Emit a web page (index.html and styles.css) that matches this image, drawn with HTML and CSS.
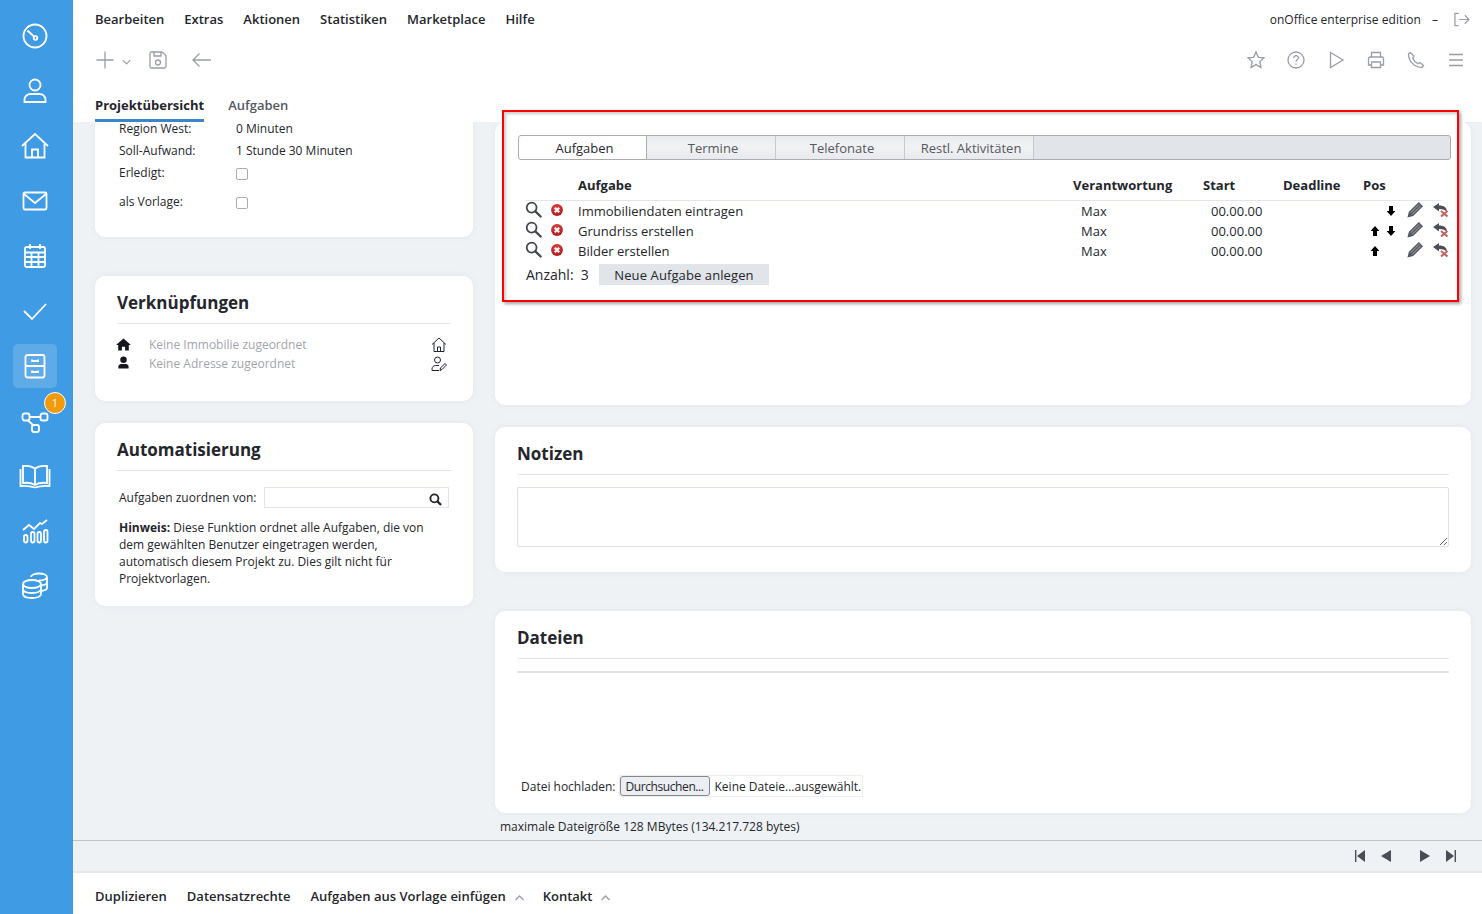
FILE: index.html
```html
<!DOCTYPE html>
<html lang="de">
<head>
    <meta charset="UTF-8">
    <meta name="viewport" content="width=device-width, initial-scale=1.0">
    <title>Projektübersicht</title>
    <link rel="stylesheet" href="styles.css">
</head>
<body>
    <!-- Shared icons for the task table -->
    <svg class="sprite" xmlns="http://www.w3.org/2000/svg">
        <defs>
            <radialGradient id="err-fill" cx="45%" cy="35%" r="70%"><stop offset="0" stop-color="#ec4a46"/><stop offset="1" stop-color="#a8141b"/></radialGradient>
        </defs>
        <symbol id="i-search" viewBox="0 0 18 18"><circle cx="7" cy="7" r="5.2" fill="none" stroke="#43464e" stroke-width="1.9"/><path d="M11 11l5.6 5.4" stroke="#43464e" stroke-width="2.4" stroke-linecap="round"/></symbol>
        <symbol id="i-error" viewBox="0 0 12 12"><circle cx="6" cy="6" r="5.9" fill="url(#err-fill)"/><path d="M3.8 3.8l4.4 4.4M8.2 3.800L3.800 8.200" stroke="#fff" stroke-width="2"/></symbol>
        <symbol id="i-up" viewBox="0 0 10 12"><path d="M5 1l4.4 5H7v5H3V6H.6z" fill="#000"/></symbol>
        <symbol id="i-down" viewBox="0 0 10 12"><path d="M5 11L.6 6H3V1h4v5h2.4z" fill="#000"/></symbol>
        <symbol id="i-pencil" viewBox="0 0 18 18"><path d="M.5 17.500L2 11.500 12.500 1l4.500 4.500L6.500 16z" fill="#55585f"/><path d="M3.800 12.500L13 3.300M5.500 14.200L14.700 5" stroke="#d4d6da" stroke-width=".7"/></symbol>
        <symbol id="i-undo" viewBox="0 0 16 14"><path d="M0 4l6-4v2.500c5 0 8 2 8 6.500-1.500-2-4-3-8-3v2.500z" fill="#4c4f57"/><path d="M8 8l6.500 5.500M14.500 8L8 13.500" stroke="#c0605f" stroke-width="2"/></symbol>
    </svg>

    <div class="app">
        <!-- Blue navigation rail -->
        <nav class="rail">
            <a class="rail-item"><svg viewBox="0 0 28 28"><circle cx="14" cy="14" r="11.500"/><path d="M6.500 8.500l6.500 6"/><circle cx="14.500" cy="16" r="1.800"/></svg></a>
            <a class="rail-item"><svg viewBox="0 0 28 28"><circle cx="14" cy="8" r="5.500"/><path d="M3.500 25v-2.500c0-3.500 3-5.500 6-5.500h9c3 0 6 2 6 5.500V25z"/></svg></a>
            <a class="rail-item"><svg viewBox="0 0 28 28"><path d="M1 14L14 2l13 12"/><path d="M4.500 11.500V25.500h19V11.500"/><path d="M11 25.500v-8h6v8"/></svg></a>
            <a class="rail-item"><svg viewBox="0 0 28 28"><rect x="2.500" y="5.500" width="23" height="17" rx="1.500"/><path d="M3 7l11 9 11-9"/></svg></a>
            <a class="rail-item"><svg viewBox="0 0 28 28"><rect x="4" y="5" width="20" height="20" rx="1.500"/><path d="M9 2v5M19 2v5M4 10.500h20M4 15h20M4 20h20M10.500 10.500V25M17.500 10.500V25"/></svg></a>
            <a class="rail-item"><svg viewBox="0 0 28 28"><path d="M3 14l8 8L25 7"/></svg></a>
            <a class="rail-item rail-active"><svg viewBox="0 0 28 28"><rect x="4.500" y="3" width="19" height="22.500" rx="2"/><path d="M4.500 14h19M11 7.500v1.500h6V7.500M11 18.500V20h6v-1.500"/></svg></a>
            <a class="rail-item"><svg viewBox="0 0 28 28"><rect x="1.500" y="6.500" width="7" height="7" rx="2"/><rect x="19.500" y="6.500" width="7" height="7" rx="2"/><rect x="11" y="18" width="7" height="7" rx="2"/><path d="M8.500 10h11M7 13.500l5 4.500"/></svg><span class="badge">1</span></a>
            <a class="rail-item"><svg viewBox="0 0 32 28"><path d="M16 6.500C13 4 8 3.500 4 4v17c4-.5 9 0 12 2 3-2 8-2.500 12-2V4c-4-.5-9 0-12 2.500zM16 6.500V23"/><path d="M1.500 7v17c5-.5 10 0 14.500 1.500C20.500 24 25.500 23.500 30.500 24V7"/></svg></a>
            <a class="rail-item"><svg viewBox="0 0 28 28"><path d="M2 13l6-5 5 4 6-6 2 1 5-4"/><rect x="3" y="18" width="3.500" height="7.500" rx="1.700"/><rect x="10" y="15" width="3.500" height="10.500" rx="1.700"/><rect x="16.500" y="15" width="3.500" height="10.500" rx="1.700"/><rect x="23" y="13" width="3.500" height="12.500" rx="1.700"/></svg></a>
            <a class="rail-item"><svg viewBox="0 0 28 28"><ellipse cx="11" cy="12" rx="9" ry="4"/><path d="M2 12v10c0 2.500 4 4 9 4s9-1.500 9-4V12M2 17c0 2.500 4 4 9 4s9-1.500 9-4"/><path d="M10 5c0-2 3.500-3.500 8-3.500S26 3 26 5s-3.500 3.500-8 3.500M26 5v11c0 1.500-2 2.500-6 3M26 10.500c0 1.500-2 2.500-6 3"/></svg></a>
        </nav>

        <div class="main">
            <header class="header">
                <div class="menu-row">
                    <ul class="menu">
                        <li>Bearbeiten</li>
                        <li>Extras</li>
                        <li>Aktionen</li>
                        <li>Statistiken</li>
                        <li>Marketplace</li>
                        <li>Hilfe</li>
                    </ul>
                    <div class="edition">
                        <span>onOffice enterprise edition</span>
                        <span class="edition-dash">–</span>
                        <svg class="tool-icon logout" viewBox="0 0 18 16"><path d="M6 1.500H2v13h4M6.500 8H17M12.500 3.500L17 8l-4.500 4.500"/></svg>
                    </div>
                </div>
                <div class="tool-row">
                    <div class="tools-left">
                        <svg class="tool-icon plus" viewBox="0 0 18 18"><path d="M9 .5v17M.5 9h17"/></svg>
                        <svg class="tool-icon caret" viewBox="0 0 10 6"><path d="M1 1l4 4 4-4"/></svg>
                        <svg class="tool-icon save" viewBox="0 0 18 18"><path d="M1 2.500C1 1.500 1.500 1 2.500 1h10.500L17 4.500v11c0 1-.5 1.500-1.500 1.500h-13C1.500 17 1 16.500 1 15.500z"/><path d="M5 1v4h7V1"/><circle cx="9" cy="11.500" r="2.500"/></svg>
                        <svg class="tool-icon back" viewBox="0 0 20 14"><path d="M19 7H1M7.500 .5L1 7l6.500 6.500"/></svg>
                    </div>
                    <div class="tools-right">
                        <svg class="tool-icon" viewBox="0 0 18 18"><path d="M9 1l2.400 5.300 5.600.6-4.200 3.800 1.200 5.800L9 13.600l-5 2.900 1.200-5.800L1 6.900l5.600-.6z"/></svg>
                        <svg class="tool-icon" viewBox="0 0 18 18"><circle cx="9" cy="9" r="8"/><path d="M6.800 7c0-3 4.600-3 4.600-.2 0 1.900-2.400 1.900-2.400 4M9 12.500v1"/></svg>
                        <svg class="tool-icon" viewBox="0 0 18 18"><path d="M3.500 1.500L16 9 3.500 16.500z"/></svg>
                        <svg class="tool-icon" viewBox="0 0 18 18"><path d="M4.500 6V1.500h9V6M4.500 14H1.500V7.500C1.500 6.500 2 6 3 6h12c1 0 1.500.5 1.500 1.500V14h-3"/><path d="M4.500 11h9v5.500h-9z"/></svg>
                        <svg class="tool-icon" viewBox="0 0 18 18"><path d="M3 1.500L1.500 3c0 7 6 13.500 13.500 13.500l1.500-2-3.500-3-2 1.200C8.500 11.500 6.500 9 5.700 7l1.300-2z"/></svg>
                        <svg class="tool-icon" viewBox="0 0 18 18"><path d="M2 3.500h14M2 9h14M2 14.500h14"/></svg>
                    </div>
                </div>
                <div class="page-tabs">
                    <a class="page-tab page-tab-active">Projektübersicht</a>
                    <a class="page-tab">Aufgaben</a>
                </div>
            </header>

            <div class="content">
                <div class="col-left">
                    <section class="card card-details">
                        <div class="detail-row"><span>Region West:</span><span>0 Minuten</span></div>
                        <div class="detail-row"><span>Soll-Aufwand:</span><span>1 Stunde 30 Minuten</span></div>
                        <div class="detail-row"><span>Erledigt:</span><input type="checkbox"></div>
                        <div class="detail-row detail-last"><span>als Vorlage:</span><input type="checkbox"></div>
                    </section>

                    <section class="card card-links">
                        <h2>Verknüpfungen</h2>
                        <div class="link-row">
                            <svg class="link-icon" viewBox="0 0 16 14"><path d="M8 .5L0 7.500h2.300V13.500h4V9.500h3.400v4h4V7.500H16z" fill="#16181d"/></svg>
                            <span>Keine Immobilie zugeordnet</span>
                            <svg class="link-action" viewBox="0 0 16 16"><path d="M1 7.500L8 1l7 6.500M3 6v8.500h10V6M6.500 14.500V10h3v4.500"/></svg>
                        </div>
                        <div class="link-row">
                            <svg class="link-icon link-icon-user" viewBox="0 0 16 14"><circle cx="8" cy="4" r="3.500" fill="#16181d"/><path d="M2.500 13.500v-2c0-2 1.500-3 3-3h5c1.500 0 3 1 3 3v2z" fill="#16181d"/></svg>
                            <span>Keine Adresse zugeordnet</span>
                            <svg class="link-action" viewBox="0 0 16 16"><circle cx="6.500" cy="4" r="3"/><path d="M8 14.500H1v-1.500c0-2 1.500-3.500 3.500-3.500H8M9 14.500l.5-2.500 4.500-4.500 1.500 1.500-4.500 4.500z"/></svg>
                        </div>
                    </section>

                    <section class="card card-auto">
                        <h2>Automatisierung</h2>
                        <div class="assign-row">
                            <label>Aufgaben zuordnen von:</label>
                            <div class="assign-input">
                                <svg viewBox="0 0 14 14"><circle cx="5.800" cy="5.800" r="4.300" fill="none" stroke="#24262c" stroke-width="2"/><path d="M9 9l4 4" stroke="#24262c" stroke-width="2.400"/></svg>
                            </div>
                        </div>
                        <p class="hint"><b>Hinweis:</b> Diese Funktion ordnet alle Aufgaben, die von dem gewählten Benutzer eingetragen werden, automatisch diesem Projekt zu. Dies gilt nicht für Projektvorlagen.</p>
                    </section>
                </div>

                <div class="col-right">
                    <section class="card card-tasks">
                        <div class="tabbar">
                            <a class="tab tab-active">Aufgaben</a>
                            <a class="tab">Termine</a>
                            <a class="tab">Telefonate</a>
                            <a class="tab">Restl. Aktivitäten</a>
                        </div>

                        <div class="task-grid task-head">
                            <span></span>
                            <span>Aufgabe</span>
                            <span>Verantwortung</span>
                            <span>Start</span>
                            <span>Deadline</span>
                            <span>Pos</span>
                        </div>
                        <div class="task-grid task-row">
                            <span class="task-icons"><svg class="ic-search"><use href="#i-search"/></svg><svg class="ic-error"><use href="#i-error"/></svg></span>
                            <span>Immobiliendaten eintragen</span>
                            <span class="indent">Max</span>
                            <span class="indent">00.00.00</span>
                            <span></span>
                            <span class="task-actions"><i></i><svg class="ic-arrow"><use href="#i-down"/></svg><svg class="ic-pencil"><use href="#i-pencil"/></svg><svg class="ic-undo"><use href="#i-undo"/></svg></span>
                        </div>
                        <div class="task-grid task-row">
                            <span class="task-icons"><svg class="ic-search"><use href="#i-search"/></svg><svg class="ic-error"><use href="#i-error"/></svg></span>
                            <span>Grundriss erstellen</span>
                            <span class="indent">Max</span>
                            <span class="indent">00.00.00</span>
                            <span></span>
                            <span class="task-actions"><svg class="ic-arrow"><use href="#i-up"/></svg><svg class="ic-arrow"><use href="#i-down"/></svg><svg class="ic-pencil"><use href="#i-pencil"/></svg><svg class="ic-undo"><use href="#i-undo"/></svg></span>
                        </div>
                        <div class="task-grid task-row">
                            <span class="task-icons"><svg class="ic-search"><use href="#i-search"/></svg><svg class="ic-error"><use href="#i-error"/></svg></span>
                            <span>Bilder erstellen</span>
                            <span class="indent">Max</span>
                            <span class="indent">00.00.00</span>
                            <span></span>
                            <span class="task-actions"><svg class="ic-arrow"><use href="#i-up"/></svg><i></i><svg class="ic-pencil"><use href="#i-pencil"/></svg><svg class="ic-undo"><use href="#i-undo"/></svg></span>
                        </div>
                        <div class="task-foot">
                            <span class="task-count">Anzahl:&nbsp; 3</span>
                            <button class="btn-new">Neue Aufgabe anlegen</button>
                        </div>
                    </section>

                    <section class="card card-notes">
                        <h2>Notizen</h2>
                        <textarea class="notes"></textarea>
                    </section>

                    <section class="card card-files">
                        <h2>Dateien</h2>
                        <div class="file-list"></div>
                        <div class="upload">
                            <span>Datei hochladen:</span>
                            <span class="file-input"><button>Durchsuchen...</button><span>Keine Dateie...ausgewählt.</span></span>
                        </div>
                    </section>
                    <p class="limit">maximale Dateigröße 128 MBytes (134.217.728 bytes)</p>
                </div>
            </div>

            <div class="pager">
                <svg viewBox="0 0 10 12"><path d="M0 0h1.400v12H0zM10 0v12L2 6z"/></svg>
                <svg viewBox="0 0 10 12"><path d="M10 0v12L0 6z"/></svg>
                <svg class="pager-next" viewBox="0 0 10 12"><path d="M0 0v12l10-6z"/></svg>
                <svg viewBox="0 0 10 12"><path d="M0 0v12l8-6zM8.600 0H10v12H8.600z"/></svg>
            </div>

            <footer class="footer">
                <a>Duplizieren</a>
                <a>Datensatzrechte</a>
                <a>Aufgaben aus Vorlage einfügen<svg viewBox="0 0 10 6"><path d="M1 5l4-4 4 4"/></svg></a>
                <a>Kontakt<svg viewBox="0 0 10 6"><path d="M1 5l4-4 4 4"/></svg></a>
            </footer>
        </div>
    </div>

    <!-- Red marker drawn over the task panel -->
    <div class="marker"></div>
</body>
</html>
```

FILE: styles.css
```css
* {
    margin: 0;
    padding: 0;
    box-sizing: border-box;
}

html, body {
    height: 100%;
    overflow: hidden;
}

body {
    font-family: "Open Sans", "Liberation Sans", sans-serif;
    font-size: 12px;
    color: #24262c;
    background: #eff2f5;
    position: relative;
}

.sprite {
    position: absolute;
    width: 0;
    height: 0;
}

.app {
    display: flex;
    height: 914px;
}

/* Navigation rail */
.rail {
    width: 73px;
    flex-shrink: 0;
    background: #3e9be4;
    padding: 14px 13px 0;
    display: flex;
    flex-direction: column;
    gap: 11px;
}

.rail-item {
    position: relative;
    width: 44px;
    height: 44px;
    border-radius: 5px;
    display: flex;
    justify-content: center;
    align-items: center;
}

.rail-item svg {
    width: 28px;
    height: 28px;
    fill: none;
    stroke: #fff;
    stroke-width: 1.8;
}

.rail-item:nth-child(9) svg {
    width: 32px;
}

.rail-active {
    background: rgba(255, 255, 255, 0.17);
}

.badge {
    position: absolute;
    top: -7px;
    left: 31px;
    width: 22px;
    height: 22px;
    border-radius: 50%;
    border: 1px solid #fff;
    background: #f09a0c;
    color: #fff;
    font-size: 11px;
    line-height: 20px;
    text-align: center;
}

.main {
    flex: 1;
    min-width: 0;
    display: flex;
    flex-direction: column;
}

/* Header */
.header {
    height: 122px;
    flex-shrink: 0;
    background: #fff;
    padding: 0 12px 0 22px;
    position: relative;
}

.menu-row {
    height: 38px;
    display: flex;
    justify-content: space-between;
    align-items: center;
}

.menu {
    list-style: none;
    display: flex;
    gap: 20px;
    font-size: 13px;
    font-weight: 600;
    color: #24262c;
}

.edition {
    display: flex;
    align-items: center;
    font-size: 12px;
    letter-spacing: 0.03px;
}

.edition-dash {
    margin: 0 15px 0 11px;
}

.tool-icon {
    fill: none;
    stroke: #9b9da6;
    stroke-width: 1.300;
    display: block;
}

.logout {
    width: 17px;
    height: 15px;
}

.tool-row {
    height: 44px;
    display: flex;
    justify-content: space-between;
    align-items: center;
}

.tools-left {
    display: flex;
    align-items: center;
}

.plus {
    width: 18px;
    height: 18px;
    margin-left: 1px;
}

.caret {
    width: 9px;
    height: 6px;
    margin: 3px 0 0 8px;
}

.save {
    width: 18px;
    height: 18px;
    margin-left: 18px;
}

.back {
    width: 20px;
    height: 14px;
    margin-left: 25px;
}

.tools-right {
    display: flex;
    align-items: center;
    gap: 22px;
    margin-right: 5px;
}

.tools-right .tool-icon {
    width: 18px;
    height: 18px;
}

.page-tabs {
    display: flex;
    gap: 24px;
    margin-top: 4px;
}

.page-tab {
    height: 36px;
    padding-top: 10px;
    font-size: 13px;
    font-weight: 600;
    color: #55585f;
}

.page-tab-active {
    font-weight: 700;
    color: #24262c;
    border-bottom: 3px solid #3d85c6;
}

/* Content area */
.content {
    flex: 1;
    min-height: 0;
    display: flex;
    gap: 22px;
    padding: 0 11px 0 22px;
}

.col-left {
    width: 378px;
    flex-shrink: 0;
}

.col-right {
    flex: 1;
    min-width: 0;
}

.card {
    background: #fff;
    border-radius: 10px;
    box-shadow: 0 0 6px rgba(120, 130, 145, 0.1);
    padding: 0 22px;
}

.card h2 {
    font-size: 17px;
    font-weight: 700;
    line-height: 24px;
    color: #24262c;
    padding-bottom: 8px;
    border-bottom: 1px solid #e1e4e8;
}

/* Detail card */
.card-details {
    height: 115px;
    margin-bottom: 39px;
    border-radius: 0 0 10px 10px;
    padding-left: 24px;
}

.detail-row {
    display: grid;
    grid-template-columns: 117px 1fr;
    height: 22px;
    line-height: 14px;
    align-items: start;
    font-size: 12px;
}

.detail-last {
    margin-top: 7px;
}

.detail-row input {
    appearance: none;
    width: 12px;
    height: 12px;
    margin-top: 2px;
    border: 1px solid #a9abb4;
    border-radius: 2px;
    background: #fff;
}

.card-links {
    height: 125px;
    margin-bottom: 22px;
    padding-top: 15px;
}

.card-links h2 {
    margin-bottom: 11px;
}

.link-row {
    display: flex;
    align-items: center;
    height: 19px;
    color: #a2a4ab;
}

.link-icon {
    width: 15px;
    height: 13px;
    margin: 0 18px 0 -1px;
}

.link-icon-user {
    margin-top: -3px;
}

.link-row span {
    flex: 1;
}

.link-action {
    width: 16px;
    height: 16px;
    fill: none;
    stroke: #24262c;
    stroke-width: 1;
    margin-right: 4px;
}

.card-auto {
    height: 183px;
    padding-top: 15px;
}

.assign-row {
    display: flex;
    align-items: center;
    gap: 8px;
    margin: 16px 2px 0 2px;
}

.assign-input {
    flex: 1;
    height: 21px;
    border: 1px solid #e1e4e8;
    display: flex;
    justify-content: flex-end;
    align-items: center;
    padding-right: 6px;
}

.assign-input svg {
    width: 13px;
    height: 13px;
    margin-top: 3px;
}

.hint {
    margin: 11px 12px 0 2px;
    line-height: 17px;
}

/* Task card */
.card-tasks {
    height: 283px;
    margin-bottom: 22px;
    padding: 13px 20px 0 23px;
}

.tabbar {
    display: flex;
    height: 25px;
    background: #e1e4e8;
    border: 1px solid #aaacb2;
    border-radius: 3px;
    margin-bottom: 13px;
}

.tab {
    width: 129px;
    padding-left: 4px;
    text-align: center;
    font-size: 13px;
    line-height: 25px;
    color: #55585f;
    background: linear-gradient(to bottom, #e8eaed, #f1f2f4 45%, #e8eaed);
    border-right: 1px solid #c6c8cd;
}

.tab-active {
    width: 128px;
    background: #fff;
    color: #24262c;
    border-right: 1px solid #aaacb2;
    border-radius: 3px 0 0 3px;
}

.task-grid {
    display: grid;
    grid-template-columns: 52px 495px 130px 80px 80px 96px;
    margin-left: 8px;
    font-size: 13px;
    align-items: center;
}

.task-head {
    height: 28px;
    padding-bottom: 4px;
    font-weight: 700;
    border-bottom: 1px solid #e1e4e8;
    margin-right: 10px;
    grid-template-columns: 52px 495px 130px 80px 80px 1fr;
}

.task-row {
    height: 20px;
}

.indent {
    padding-left: 8px;
}

.task-icons {
    display: flex;
    align-items: center;
    height: 20px;
    position: relative;
    top: -2px;
    left: -1px;
}

.ic-search {
    width: 17px;
    height: 17px;
}

.ic-error {
    width: 12px;
    height: 12px;
    margin: 2px 0 0 9px;
}

.task-actions {
    display: flex;
    align-items: center;
    height: 20px;
    padding-left: 7px;
}

.task-actions i,
.ic-arrow {
    display: block;
    width: 10px;
    height: 12px;
    margin-right: 6px;
}

.ic-pencil {
    width: 17px;
    height: 17px;
    margin: -4px 0 0 5px;
}

.ic-undo {
    width: 16px;
    height: 14px;
    margin: -2px 0 0 9px;
}

.task-foot {
    display: flex;
    align-items: center;
    margin: 3px 0 0 8px;
    font-size: 13px;
}

.task-count {
    width: 73px;
    font-size: 14px;
}

.btn-new {
    width: 170px;
    height: 21px;
    border: none;
    background: #e1e4e8;
    color: #24262c;
    font: inherit;
    letter-spacing: 0.1px;
}

/* Notes */
.card-notes {
    height: 145px;
    margin-bottom: 39px;
    padding-top: 15px;
}

.notes {
    display: block;
    width: 100%;
    height: 60px;
    margin-top: 12px;
    border: 1px solid #dcdfe4;
    border-radius: 2px;
    background: #fff;
}

/* Files */
.card-files {
    height: 202px;
    padding-top: 15px;
    display: flex;
    flex-direction: column;
}

.file-list {
    height: 14px;
    border-bottom: 2px solid #dfe1e5;
}

.upload {
    display: flex;
    align-items: center;
    gap: 3px;
    margin: 102px 0 0 4px;
    height: 22px;
}

.file-input {
    display: flex;
    align-items: center;
    height: 22px;
    padding-right: 1px;
    border: 1px solid #eceef1;
}

.file-input button {
    width: 90px;
    height: 20px;
    margin-right: 5px;
    border: 1px solid #85878e;
    border-radius: 3px;
    background: #eceef1;
    font: inherit;
    letter-spacing: -0.4px;
    color: #24262c;
}

.limit {
    margin: 6px 0 0 5px;
    line-height: 16px;
}

/* Pager and footer */
.pager {
    height: 33px;
    flex-shrink: 0;
    border-top: 1px solid #bfc2c7;
    border-bottom: 2px solid #e6e8eb;
    display: flex;
    justify-content: flex-end;
    align-items: center;
    gap: 16px;
    padding-right: 26px;
}

.pager svg {
    width: 10px;
    height: 12px;
    fill: #4a4d55;
}

.pager .pager-next {
    margin-left: 13px;
}

.footer {
    height: 41px;
    flex-shrink: 0;
    background: #fff;
    display: flex;
    align-items: center;
    gap: 20px;
    padding: 4px 0 0 22px;
    font-size: 13px;
    font-weight: 600;
}

.footer svg {
    width: 11px;
    height: 6px;
    margin: 0 -2px 0 8px;
    fill: none;
    stroke: #9b9da6;
    stroke-width: 1.300;
}

/* Annotation */
.marker {
    position: absolute;
    left: 502px;
    top: 110px;
    width: 957px;
    height: 192px;
    border: 2px solid #f00;
    box-shadow: 2px 2px 3px rgba(0, 0, 0, 0.35), inset 2px 2px 3px rgba(0, 0, 0, 0.2);
    pointer-events: none;
}
```
